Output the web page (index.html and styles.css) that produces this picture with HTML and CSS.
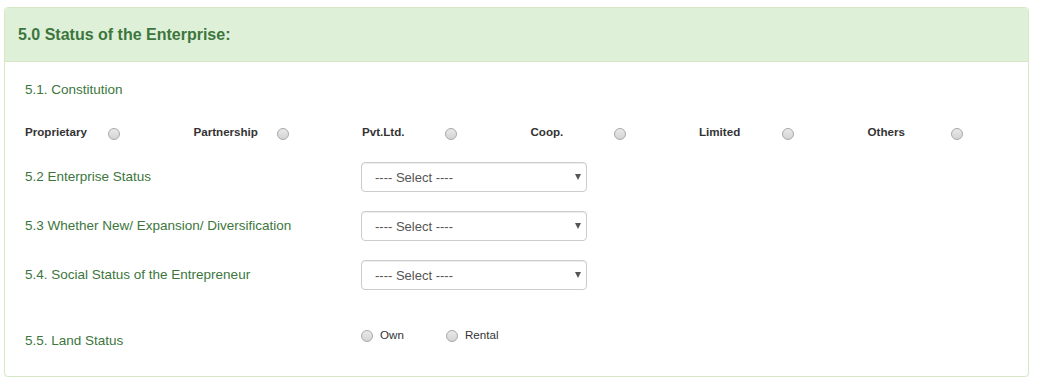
FILE: index.html
```html
<!DOCTYPE html>
<html lang="en">
<head>
    <meta charset="UTF-8">
    <title>Status of the Enterprise</title>
    <link rel="stylesheet" href="styles.css">
</head>
<body>
    <div class="wrapper">
        <div class="panel">
            <div class="panel-heading">
                <h3 class="panel-title">5.0 Status of the Enterprise:</h3>
            </div>
            <div class="panel-body">
                <div class="field-label">5.1. Constitution</div>

                <div class="radio-grid">
                    <div class="radio-cell"><span class="radio-text">Proprietary</span><input type="radio" name="constitution"></div>
                    <div class="radio-cell"><span class="radio-text">Partnership</span><input type="radio" name="constitution"></div>
                    <div class="radio-cell"><span class="radio-text">Pvt.Ltd.</span><input type="radio" name="constitution"></div>
                    <div class="radio-cell"><span class="radio-text">Coop.</span><input type="radio" name="constitution"></div>
                    <div class="radio-cell"><span class="radio-text">Limited</span><input type="radio" name="constitution"></div>
                    <div class="radio-cell"><span class="radio-text">Others</span><input type="radio" name="constitution"></div>
                </div>

                <div class="form-row">
                    <label class="field-label row-label">5.2 Enterprise Status</label>
                    <div class="select-wrap">
                        <select class="form-control"><option>---- Select ----</option></select>
                    </div>
                </div>
                <div class="form-row">
                    <label class="field-label row-label">5.3 Whether New/ Expansion/ Diversification</label>
                    <div class="select-wrap">
                        <select class="form-control"><option>---- Select ----</option></select>
                    </div>
                </div>
                <div class="form-row">
                    <label class="field-label row-label">5.4. Social Status of the Entrepreneur</label>
                    <div class="select-wrap">
                        <select class="form-control"><option>---- Select ----</option></select>
                    </div>
                </div>

                <div class="form-row land-row">
                    <label class="field-label row-label land-label">5.5. Land Status</label>
                    <div class="inline-radios">
                        <label class="inline-radio"><input type="radio" name="land">Own</label>
                        <label class="inline-radio"><input type="radio" name="land">Rental</label>
                    </div>
                </div>
            </div>
        </div>
    </div>
</body>
</html>
```

FILE: styles.css
```css
*{
    padding:0;
    margin:0;
    box-sizing:border-box;
}
body{
    font-family:"Liberation Sans", Arial, sans-serif;
    font-size:14px;
    color:#333;
    background:#fff;
}
.wrapper{
    padding:7px 8px 0 4px;
}
.panel{
    border:1px solid #d6e9c6;
    border-radius:4px;
    background:#fff;
    box-shadow:0 1px 1px rgba(0,0,0,0.05);
}
.panel-heading{
    background-color:#dff0d8;
    border-bottom:1px solid #d6e9c6;
    border-radius:3px 3px 0 0;
    padding:17px 13px 16px;
}
.panel-title{
    font-size:16px;
    font-weight:bold;
    line-height:20px;
    color:#3c763d;
}
.panel-body{
    padding:18px 0 25px 20px;
}
.field-label{
    color:#3c763d;
    font-size:13.5px;
    line-height:20px;
    font-weight:normal;
}
.radio-grid{
    display:grid;
    grid-template-columns:repeat(6, 168.5px);
    margin-top:21px;
}
.radio-cell{
    display:flex;
    align-items:flex-start;
    height:21px;
    padding-top:1px;
}
.radio-text{
    width:83px;
    font-size:11.6px;
    font-weight:bold;
    line-height:20px;
    color:#333;
}
input[type="radio"]{
    appearance:none;
    -webkit-appearance:none;
    width:12px;
    height:12px;
    border-radius:50%;
    border:1px solid #a9a9a9;
    background:linear-gradient(#e9e9e9, #d4d4d4);
    margin-top:6px;
}
.form-row{
    display:flex;
    align-items:center;
    margin-top:19px;
}
.radio-grid + .form-row{
    margin-top:20px;
}
.row-label{
    width:336px;
}
.select-wrap{
    position:relative;
    width:226px;
}
.select-wrap::after{
    content:"";
    position:absolute;
    right:6px;
    top:12px;
    border-left:3.5px solid transparent;
    border-right:3.5px solid transparent;
    border-top:6px solid #555;
    pointer-events:none;
}
.form-control{
    appearance:none;
    -webkit-appearance:none;
    width:226px;
    height:30px;
    padding:0 13px;
    font-family:"Liberation Sans", Arial, sans-serif;
    font-size:13px;
    color:#555;
    background:#fff;
    border:1px solid #ccc;
    border-radius:4px;
    box-shadow:inset 0 1px 1px rgba(0,0,0,0.075);
}
.land-row{
    align-items:flex-start;
    margin-top:35px;
}
.land-label{
    padding-top:6px;
}
.inline-radios{
    display:flex;
    padding-left:0;
}
.inline-radio{
    display:flex;
    align-items:flex-start;
    font-size:11.6px;
    line-height:20px;
    color:#333;
    width:85px;
}
.inline-radio input[type="radio"]{
    margin:5px 7px 0 0;
}
```
